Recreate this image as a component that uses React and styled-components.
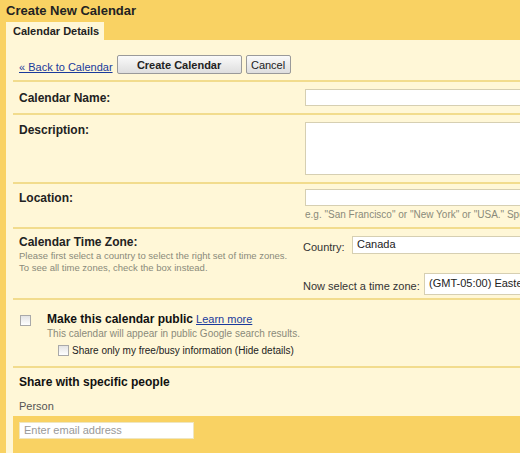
import styled, { createGlobalStyle } from 'styled-components';

const GlobalStyle = createGlobalStyle`
  html, body {
    margin: 0;
    padding: 0;
    background: #f9d263;
    overflow: hidden;
  }
  body {
    font-family: "Liberation Sans", Arial, sans-serif;
    color: #000;
  }
`;

const Page = styled.div`
  width: 520px;
  height: 453px;
  overflow: hidden;
  background: #f9d263;
`;

const Title = styled.h1`
  margin: 0;
  padding: 3px 6px 0;
  height: 19px;
  font-size: 13px;
  font-weight: bold;
  color: #222;
`;

const Tabs = styled.div`
  display: flex;
  padding-left: 6px;
`;

const Tab = styled.div`
  background: #fff7d7;
  padding: 3px 5px 0 7px;
  height: 15px;
  font-size: 11px;
  font-weight: bold;
  color: #222;
`;

const Panel = styled.div`
  margin-left: 6px;
  background: #fff7d7;
  width: 600px;
`;

const Toolbar = styled.div`
  display: flex;
  align-items: flex-end;
  gap: 4px;
  padding: 15px 0 6px 13px;
`;

const BackLink = styled.a`
  font-size: 11px;
  color: #1a3a9c;
  text-decoration: underline;
  margin-bottom: 1px;
`;

const Button = styled.button`
  font-family: "Liberation Sans", Arial, sans-serif;
  font-size: 11px;
  font-weight: ${p => (p.$primary ? 'bold' : 'normal')};
  width: ${p => p.$width}px;
  height: 19px;
  padding: 0;
  border: 1px solid #9a9a9a;
  border-radius: 2px;
  background: linear-gradient(#fafafa, #dedede);
  color: #222;
`;

const Row = styled.div`
  display: grid;
  grid-template-columns: 286px 1fr;
  margin-left: 7px;
  padding: ${p => p.$pad || '7px 0 7px 6px'};
  border-top: 2px solid #f2dc8d;
`;

const Label = styled.div`
  font-size: 12px;
  font-weight: bold;
  color: #222;
  padding-top: ${p => p.$top ?? 2}px;
`;

const Hint = styled.div`
  font-size: ${p => p.$size || 10}px;
  color: #8a8a7a;
  line-height: 12px;
  white-space: nowrap;
  margin-top: ${p => p.$top || 0}px;
`;

const Field = styled.div`
  display: flex;
  flex-direction: column;
`;

const TextInput = styled.div`
  width: 300px;
  height: ${p => p.$height || 15}px;
  background: #fff;
  border: 1px solid #d6cfb2;
`;

const SelectLine = styled.div`
  display: flex;
  align-items: center;
  margin-top: ${p => p.$top || 0}px;
  margin-left: -2px;
`;

const SelectLabel = styled.span`
  font-size: 11px;
  color: #333;
  width: ${p => p.$width}px;
  padding-top: 4px;
`;

const Select = styled.div`
  width: 240px;
  height: ${p => p.$height}px;
  background: #fff;
  border: 1px solid #d6cfb2;
  font-size: 11px;
  color: #222;
  padding-left: 4px;
  display: flex;
  align-items: center;
  box-sizing: border-box;
  padding-bottom: 2px;
  white-space: nowrap;
`;

const PublicRow = styled.div`
  margin-left: 7px;
  border-top: 2px solid #f2dc8d;
  padding: 9px 0 10px 7px;
  display: grid;
  grid-template-columns: 27px 1fr;
`;

const Box = styled.span`
  display: inline-block;
  width: ${p => p.$size}px;
  height: ${p => p.$size}px;
  margin-top: ${p => p.$top || 0}px;
  border: 1px solid #a9a9a9;
  background: linear-gradient(#e4e4e4, #fff);
  box-sizing: border-box;
`;

const Strong = styled.span`
  font-size: 12px;
  font-weight: bold;
  color: #111;
`;

const SmallLink = styled.a`
  font-size: 11px;
  color: #1a3a9c;
  text-decoration: underline;
  margin-left: 3px;
`;

const SubOption = styled.div`
  display: flex;
  align-items: center;
  gap: 3px;
  margin-top: 5px;
  margin-left: 11px;
  font-size: 10px;
  color: #222;
`;

const ShareSection = styled.div`
  margin-left: 7px;
  border-top: 2px solid #f2dc8d;
  padding: 7px 0 0 0;
`;

const ShareTitle = styled.div`
  font-size: 12px;
  font-weight: bold;
  color: #111;
  padding-left: 6px;
`;

const PersonHead = styled.div`
  font-size: 11px;
  color: #555;
  padding: 11px 0 4px 6px;
`;

const PersonBand = styled.div`
  background: #f9d263;
  padding: 6px 0 20px 6px;
`;

const EmailInput = styled.div`
  width: 169px;
  height: 15px;
  background: #fff;
  border: 1px solid #efe6c0;
  font-size: 11px;
  color: #999;
  padding-left: 4px;
  line-height: 15px;
`;

export default function App() {
  return (
    <Page>
      <GlobalStyle />
      <Title>Create New Calendar</Title>
      <Tabs>
        <Tab>Calendar Details</Tab>
      </Tabs>
      <Panel>
        <Toolbar>
          <BackLink>« Back to Calendar</BackLink>
          <Button $primary $width={125}>Create Calendar</Button>
          <Button $width={45}>Cancel</Button>
        </Toolbar>

        <Row>
          <Label>Calendar Name:</Label>
          <Field>
            <TextInput />
          </Field>
        </Row>

        <Row $pad="7px 0 7px 6px">
          <Label $top={1}>Description:</Label>
          <Field>
            <TextInput $height={51} />
          </Field>
        </Row>

        <Row $pad="5px 0 6px 6px">
          <Label $top={2}>Location:</Label>
          <Field>
            <TextInput />
            <Hint $top={3}>e.g. "San Francisco" or "New York" or "USA." Specifying a general location will help people find events</Hint>
          </Field>
        </Row>

        <Row $pad="6px 0 3px 6px">
          <div>
            <Label $top={0}>Calendar Time Zone:</Label>
            <Hint $top={1} $size={9.5}>
              Please first select a country to select the right set of time zones.
              <br />
              To see all time zones, check the box instead.
            </Hint>
          </div>
          <Field>
            <SelectLine $top={1}>
              <SelectLabel $width={49}>Country:</SelectLabel>
              <Select $height={18}>Canada</Select>
            </SelectLine>
            <SelectLine $top={19}>
              <SelectLabel $width={121}>Now select a time zone:</SelectLabel>
              <Select $height={22}>(GMT-05:00) Eastern</Select>
            </SelectLine>
          </Field>
        </Row>

        <PublicRow>
          <div>
            <Box $size={11} $top={6} />
          </div>
          <div>
            <div>
              <Strong>Make this calendar public</Strong>
              <SmallLink>Learn more</SmallLink>
            </div>
            <Hint $top={1}>This calendar will appear in public Google search results.</Hint>
            <SubOption>
              <Box $size={11} />
              Share only my free/busy information (Hide details)
            </SubOption>
          </div>
        </PublicRow>

        <ShareSection>
          <ShareTitle>Share with specific people</ShareTitle>
          <PersonHead>Person</PersonHead>
          <PersonBand>
            <EmailInput>Enter email address</EmailInput>
          </PersonBand>
        </ShareSection>
      </Panel>
    </Page>
  );
}
